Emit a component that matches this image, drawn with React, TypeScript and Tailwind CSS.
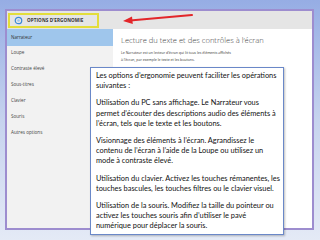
import React from "react";

const sidebar = ["Narrateur", "Loupe", "Contraste élevé", "Sous-titres", "Clavier", "Souris", "Autres options"];

const paras: string[][] = [
  ["Les options d’ergonomie peuvent faciliter les opérations", "suivantes :"],
  ["Utilisation du PC sans affichage. Le Narrateur vous", "permet d’écouter des descriptions audio des éléments à", "l’écran, tels que le texte et les boutons."],
  ["Visionnage des éléments à l’écran. Agrandissez le", "contenu de l’écran à l’aide de la Loupe ou utilisez un", "mode à contraste élevé."],
  ["Utilisation du clavier. Activez les touches rémanentes, les", "touches bascules, les touches filtres ou le clavier visuel."],
  ["Utilisation de la souris. Modifiez la taille du pointeur ou", "activez les touches souris afin d’utiliser le pavé", "numérique pour déplacer la souris."],
];

export default function App() {
  return (
    <div className="relative w-[320px] h-[240px] overflow-hidden bg-gradient-to-b from-[#96ade4] via-[#c6d3ee] to-[#e4eaf6] pt-[9px] pl-[5px]" style={{ fontFamily: '"Open Sans", "Noto Sans", sans-serif' }}>
      <div className="w-[309px] h-[221px] border-2 border-[#9d8dcf] bg-white flex flex-col">
        <div className="h-[18px] bg-[#e5e5e5] flex items-center pl-[1px]">
          <div className="h-[15px] w-[91px] border-2 border-[#e3dd3a] flex items-center gap-[4px] pl-[4px]">
            <svg width="9" height="9" viewBox="0 0 10 10">
              <circle cx="5" cy="5" r="3.6" fill="none" stroke="#3d8bd6" strokeWidth="1.4" />
              <circle cx="5" cy="5" r="1.4" fill="#9cc6ef" />
            </svg>
            <span className="text-[4.6px] font-bold text-[#333] tracking-[0.1px]">OPTIONS D’ERGONOMIE</span>
          </div>
        </div>
        <div className="flex flex-1">
          <div className="w-[106px] bg-[#f2f2f2] flex flex-col">
            {sidebar.map((s, i) =>
              i === 0 ? (
                <div key={s} className="h-[17px] flex items-center pl-[4px] text-[4.6px] text-[#333] bg-[#9fc6ec]">
                  {s}
                </div>
              ) : (
                <div key={s} className="h-[16px] flex items-center pl-[4px] pb-[3px] text-[4.6px] text-[#444]">
                  {s}
                </div>
              )
            )}
          </div>
          <div className="flex-1 pl-[8px] pt-[6px]">
            <div className="text-[7.6px] font-light text-[#444] leading-[10px]">Lecture du texte et des contrôles à l’écran</div>
            <div className="mt-[4px] text-[3.5px] text-[#333] leading-[7px]">
              <div>Le Narrateur est un lecteur d’écran qui lit tous les éléments affichés</div>
              <div>à l’écran, par exemple le texte et les boutons.</div>
            </div>
          </div>
        </div>
      </div>

      <svg className="absolute left-[118px] top-[11px]" width="80" height="16" viewBox="0 0 80 16">
        <line x1="74" y1="4" x2="12" y2="9.5" stroke="#e3262a" strokeWidth="2" strokeLinecap="round" />
        <polygon points="5,10 14,5.5 14.8,13" fill="#e3262a" />
      </svg>

      <div className="absolute left-[90px] top-[67px] w-[194px] h-[168px] bg-white border border-[#6a88c8] shadow-[1px_1px_2px_rgba(0,0,0,0.25)] pl-[5px] pt-[3px] text-[7.4px] leading-[10.2px] text-[#111]" style={{ fontFamily: 'Lato, "Open Sans", sans-serif' }}>
        {paras.map((p, i) => (
          <div key={i} className={i > 0 ? "mt-[7px]" : ""}>
            {p.map((l) => (
              <div key={l} className="whitespace-nowrap">{l}</div>
            ))}
          </div>
        ))}
      </div>
    </div>
  );
}
